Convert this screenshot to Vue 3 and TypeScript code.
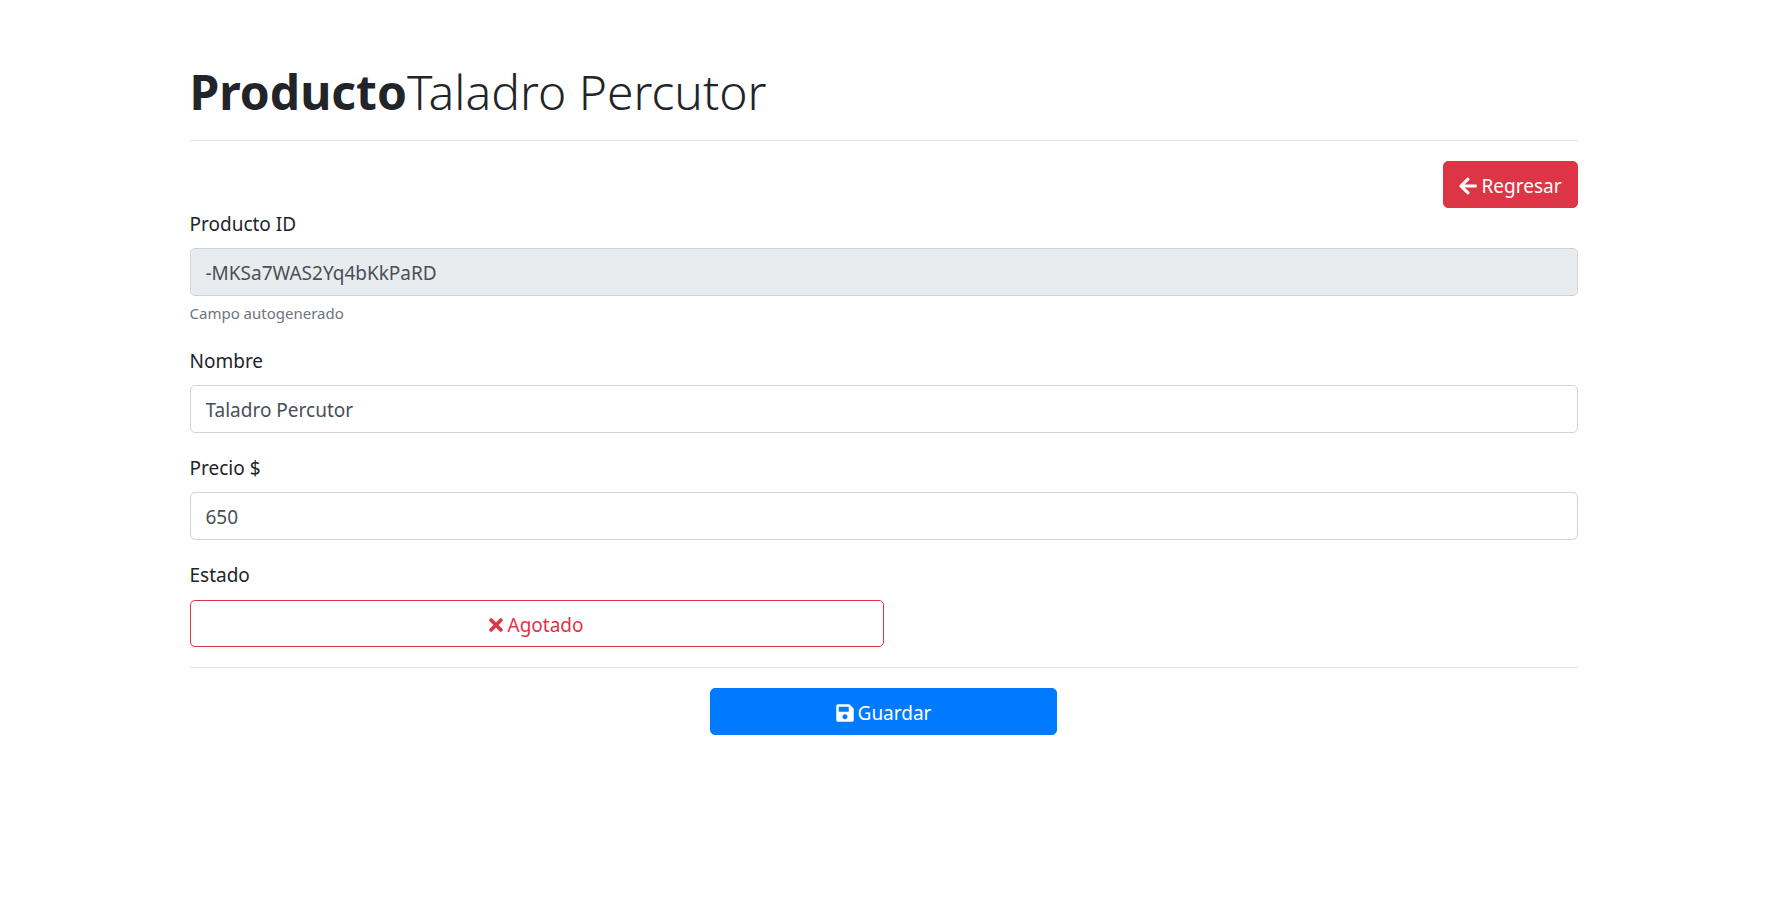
<script setup lang="ts">
import { reactive } from 'vue'

interface Producto {
  id: string
  nombre: string
  precio: string
  disponible: boolean
}

const producto = reactive<Producto>({
  id: '-MKSa7WAS2Yq4bKkPaRD',
  nombre: 'Taladro Percutor',
  precio: '650',
  disponible: false,
})

function alternarEstado(): void {
  producto.disponible = !producto.disponible
}
</script>

<template>
  <main class="container">
    <h1><strong>Producto</strong>{{ producto.nombre }}</h1>
    <hr />

    <div class="toolbar">
      <button type="button" class="btn btn-danger">
        <svg class="icon-wide" viewBox="0 0 448 512" aria-hidden="true">
          <path fill="currentColor" d="M257.5 445.1l-22.2 22.2c-9.4 9.4-24.6 9.4-33.9 0L7 273c-9.4-9.4-9.4-24.6 0-33.9L201.4 44.7c9.4-9.4 24.6-9.4 33.9 0l22.2 22.2c9.5 9.5 9.3 25-.4 34.3L136.6 216H424c13.3 0 24 10.7 24 24v32c0 13.3-10.7 24-24 24H136.6l120.5 114.8c9.8 9.3 10 24.8.4 34.3z" />
        </svg>
        <span>Regresar</span>
      </button>
    </div>

    <form @submit.prevent>
      <div class="field">
        <label for="producto-id">Producto ID</label>
        <input id="producto-id" v-model="producto.id" type="text" disabled aria-describedby="id-ayuda" />
        <small id="id-ayuda">Campo autogenerado</small>
      </div>

      <div class="field">
        <label for="nombre">Nombre</label>
        <input id="nombre" v-model="producto.nombre" type="text" />
      </div>

      <div class="field">
        <label for="precio">Precio $</label>
        <input id="precio" v-model="producto.precio" type="text" inputmode="decimal" />
      </div>

      <div class="state">
        <label for="estado">Estado</label>
        <button
          id="estado"
          type="button"
          class="btn btn-state"
          :class="{ available: producto.disponible }"
          @click="alternarEstado"
        >
          <svg v-if="!producto.disponible" class="icon-cross" viewBox="0 0 352 512" aria-hidden="true">
            <path fill="currentColor" d="M242.72 256l100.07-100.07c12.28-12.28 12.28-32.19 0-44.48l-22.24-22.24c-12.28-12.28-32.19-12.28-44.48 0L176 189.28 75.93 89.21c-12.28-12.28-32.19-12.28-44.48 0L9.21 111.45c-12.28 12.28-12.28 32.19 0 44.48L109.28 256 9.21 356.07c-12.28 12.28-12.28 32.19 0 44.48l22.24 22.24c12.28 12.28 32.2 12.28 44.48 0L176 322.72l100.07 100.07c12.28 12.28 32.2 12.28 44.48 0l22.24-22.24c12.28-12.28 12.28-32.19 0-44.48L242.72 256z" />
          </svg>
          <span>{{ producto.disponible ? 'Disponible' : 'Agotado' }}</span>
        </button>
      </div>

      <hr />

      <div class="actions">
        <button type="submit" class="btn btn-primary">
          <svg class="icon-wide" viewBox="0 0 448 512" aria-hidden="true">
            <path fill="currentColor" d="M433.941 129.941l-83.882-83.882A48 48 0 0 0 316.118 32H48C21.49 32 0 53.49 0 80v352c0 26.51 21.49 48 48 48h352c26.51 0 48-21.49 48-48V163.882a48 48 0 0 0-14.059-33.941zM224 416c-35.346 0-64-28.654-64-64 0-35.346 28.654-64 64-64s64 28.654 64 64c0 35.346-28.654 64-64 64zm96-304.52V212c0 6.627-5.373 12-12 12H76c-6.627 0-12-5.373-12-12V108c0-6.627 5.373-12 12-12h228.52c3.183 0 6.235 1.264 8.485 3.515l3.48 3.48A11.996 11.996 0 0 1 320 111.48z" />
          </svg>
          <span>Guardar</span>
        </button>
      </div>
    </form>
  </main>
</template>

<style>
body {
  margin: 0;
  background: #fff;
}
</style>

<style scoped>
.container {
  box-sizing: border-box;
  max-width: 1426px;
  margin: 0 auto;
  padding: 60px 19px 40px;
  color: #212529;
  font-family: "Segoe UI", "Noto Sans", "Open Sans", sans-serif;
  font-size: 19px;
  line-height: 30px;
}

h1 {
  margin: 0;
  font-size: 48px;
  font-weight: 300;
  line-height: 64px;
}

strong {
  font-weight: 700;
}

hr {
  height: 1px;
  margin: 20px 0;
  border: 0;
  background: #e5e5e5;
}

h1 + hr {
  margin-top: 16px;
}

.toolbar {
  display: flex;
  justify-content: flex-end;
}

.field {
  margin-bottom: 19px;
}

label {
  display: block;
  width: fit-content;
  margin-bottom: 8px;
  line-height: 32px;
}

input {
  display: block;
  box-sizing: border-box;
  width: 100%;
  height: 48px;
  padding: 2px 15px 0;
  border: 1px solid #ced4da;
  border-radius: 5px;
  background: #fff;
  color: #495057;
  font: inherit;
}

input:disabled {
  background: #e9ecef;
  opacity: 1;
}

small {
  display: block;
  margin-top: 5px;
  color: #6c757d;
  font-size: 15px;
  line-height: 25px;
}

.btn {
  display: flex;
  align-items: center;
  justify-content: center;
  gap: 4px;
  box-sizing: border-box;
  height: 47px;
  padding: 2px 15px 0;
  border: 1px solid transparent;
  border-radius: 5px;
  color: #fff;
  font: inherit;
  cursor: pointer;
}

.btn-danger {
  border-color: #dc3545;
  background: #dc3545;
}

.state label {
  margin-bottom: 9px;
}

.btn-state {
  width: 50%;
  border-color: #dc3545;
  background: transparent;
  color: #dc3545;
}

.btn-state.available {
  border-color: #28a745;
  color: #28a745;
}

.actions {
  display: flex;
  justify-content: center;
}

.btn-primary {
  width: 25%;
  border-color: #007bff;
  background: #007bff;
}

.icon-wide {
  width: 18px;
  height: 20px;
}

.icon-cross {
  width: 14px;
  height: 20px;
}
</style>
